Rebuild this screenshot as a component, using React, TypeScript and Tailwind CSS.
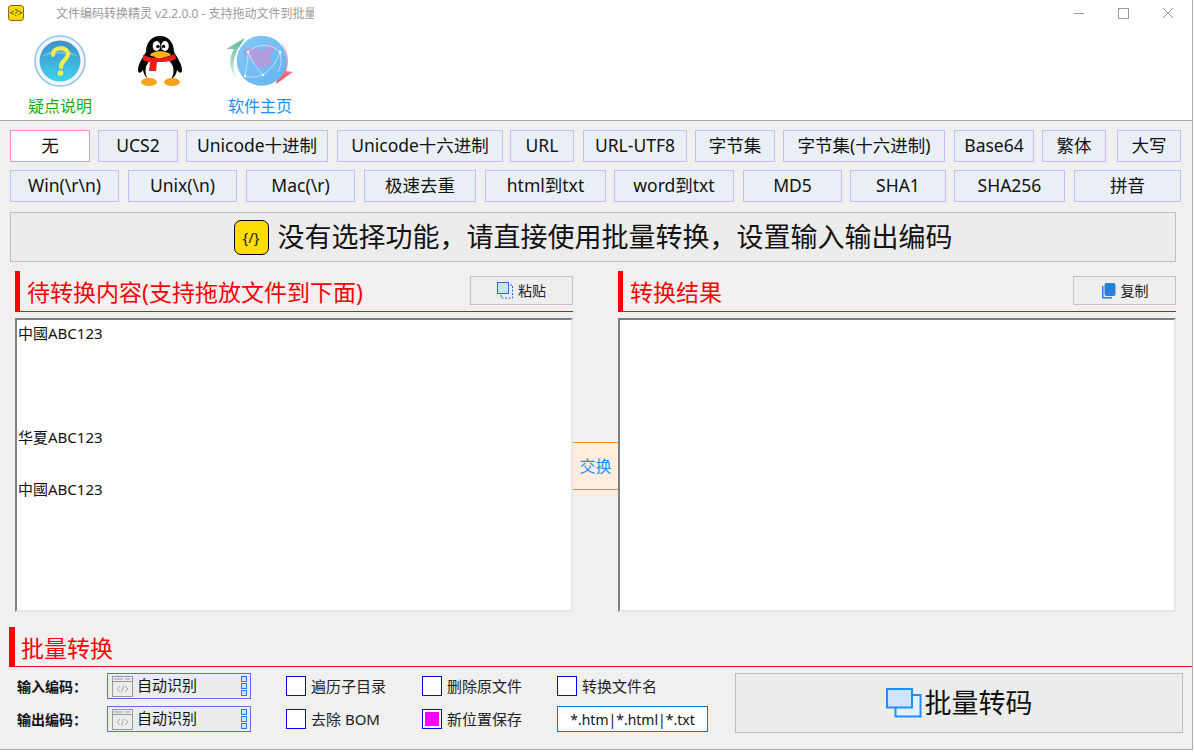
import { ReactNode } from 'react';

const rowOne = [
  { label: '无', cls: 'w-[80px] bg-white border-[#ff8fc0]' },
  { label: 'UCS2', cls: 'w-[80px] ml-[8px] bg-[#e9eff5] border-[#c0c0ff]' },
  { label: 'Unicode十进制', cls: 'w-[142px] ml-[8px] bg-[#e9eff5] border-[#c0c0ff]' },
  { label: 'Unicode十六进制', cls: 'w-[166px] ml-[9px] bg-[#e9eff5] border-[#c0c0ff]' },
  { label: 'URL', cls: 'w-[64px] ml-[7px] bg-[#e9eff5] border-[#c0c0ff]' },
  { label: 'URL-UTF8', cls: 'w-[104px] ml-[9px] bg-[#e9eff5] border-[#c0c0ff]' },
  { label: '字节集', cls: 'w-[80px] ml-[8px] bg-[#e9eff5] border-[#c0c0ff]' },
  { label: '字节集(十六进制)', cls: 'w-[162px] ml-[8px] bg-[#e9eff5] border-[#c0c0ff]' },
  { label: 'Base64', cls: 'w-[80px] ml-[9px] bg-[#e9eff5] border-[#c0c0ff]' },
  { label: '繁体', cls: 'w-[64px] ml-[8px] bg-[#e9eff5] border-[#c0c0ff]' },
  { label: '大写', cls: 'w-[64px] ml-[11px] bg-[#e9eff5] border-[#c0c0ff]' },
];

const rowTwo = [
  { label: 'Win(\\r\\n)', cls: 'w-[109px] bg-[#e9eff5] border-[#c0c0ff]' },
  { label: 'Unix(\\n)', cls: 'w-[109px] ml-[9px] bg-[#e9eff5] border-[#c0c0ff]' },
  { label: 'Mac(\\r)', cls: 'w-[109px] ml-[9px] bg-[#e9eff5] border-[#c0c0ff]' },
  { label: '极速去重', cls: 'w-[112px] ml-[9px] bg-[#e9eff5] border-[#c0c0ff]' },
  { label: 'html到txt', cls: 'w-[121px] ml-[9px] bg-[#e9eff5] border-[#c0c0ff]' },
  { label: 'word到txt', cls: 'w-[120px] ml-[8px] bg-[#e9eff5] border-[#c0c0ff]' },
  { label: 'MD5', cls: 'w-[99px] ml-[9px] bg-[#e9eff5] border-[#c0c0ff]' },
  { label: 'SHA1', cls: 'w-[96px] ml-[8px] bg-[#e9eff5] border-[#c0c0ff]' },
  { label: 'SHA256', cls: 'w-[111px] ml-[8px] bg-[#e9eff5] border-[#c0c0ff]' },
  { label: '拼音', cls: 'w-[107px] ml-[9px] bg-[#e9eff5] border-[#c0c0ff]' },
];

function ToolButton({ label, cls }: { label: string; cls: string }) {
  return (
    <button className={`h-[32px] shrink-0 border pb-px text-[17.5px] leading-none text-[#111] ${cls}`}>
      {label}
    </button>
  );
}

function HelpIcon() {
  return (
    <svg width="52" height="52" viewBox="0 0 52 52">
      <defs>
        <linearGradient id="helpFill" x1="0" y1="0" x2="0" y2="1">
          <stop offset="0" stopColor="#3f8fc8" />
          <stop offset="1" stopColor="#3fd0ee" />
        </linearGradient>
      </defs>
      <circle cx="26" cy="26" r="25" fill="#f3f5f8" stroke="#8fc2ec" strokeWidth="1.5" />
      <circle cx="26" cy="26" r="20.5" fill="url(#helpFill)" />
      <path d="M8 22c6-9 30-9 36 0-8-4-28-4-36 0z" fill="#fff" opacity="0.25" />
      <path d="M19 20c0-9 15-9 15-1 0 6-7 6-7 13" fill="none" stroke="#ffee4a" strokeWidth="4" strokeLinecap="round" />
      <circle cx="26.5" cy="38" r="2.8" fill="#ffee4a" />
    </svg>
  );
}

function PenguinIcon() {
  return (
    <svg width="46" height="52" viewBox="0 0 46 52">
      <path d="M23 1c9 0 14 7 14 16 3 5 8 12 8 18 0 4-3 3-5 0-1 6-5 12-17 12S7 41 6 35c-2 3-5 4-5 0 0-6 5-13 8-18C9 8 14 1 23 1z" fill="#050505" />
      <ellipse cx="22.5" cy="36" rx="14" ry="14" fill="#fff" />
      <ellipse cx="19.5" cy="11" rx="3.8" ry="5" fill="#fff" />
      <ellipse cx="28" cy="11" rx="3.8" ry="5" fill="#fff" />
      <circle cx="21" cy="11.5" r="1.8" fill="#111" />
      <circle cx="26.5" cy="11.5" r="1.8" fill="#111" />
      <path d="M13 20c3-5 17-5 21 0-3 3-18 3-21 0z" fill="#f9b21a" />
      <path d="M6 20c10 4 22 4 32-1l1 5c-4 2-9 3-14 3h-5l-1 9h-7l1-9c-3 0-5-1-7-2z" fill="#ee1c14" />
      <ellipse cx="12" cy="47" rx="8" ry="4" fill="#f7a21b" />
      <ellipse cx="35" cy="47" rx="8" ry="4" fill="#f7a21b" />
    </svg>
  );
}

function GlobeIcon() {
  return (
    <svg width="68" height="52" viewBox="0 0 68 52">
      <defs>
        <linearGradient id="leftArrow" x1="0" y1="0" x2="0" y2="1">
          <stop offset="0" stopColor="#5fb59a" />
          <stop offset="1" stopColor="#e4f3ee" />
        </linearGradient>
        <linearGradient id="rightArrow" x1="0" y1="0" x2="0" y2="1">
          <stop offset="0" stopColor="#f9dbe8" />
          <stop offset="1" stopColor="#e8505f" />
        </linearGradient>
        <linearGradient id="globeFill" x1="0" y1="0" x2="1" y2="1">
          <stop offset="0" stopColor="#85c8f7" />
          <stop offset="1" stopColor="#62b4f0" />
        </linearGradient>
      </defs>
      <path d="M0 14L19 3l-5 8C8 18 5 34 11 44 3 36 2 24 8 14z" fill="url(#leftArrow)" />
      <path d="M54 6c8 7 10 20 6 30l7 1-17 12 3-11c6-10 7-23 1-32z" fill="url(#rightArrow)" />
      <circle cx="35.7" cy="25.7" r="25" fill="url(#globeFill)" />
      <path d="M17 16l5-2 7-2 8 4 4-7 8 2-2 6-3 4 2 6-5 5h-9l-5-6-5-4-4-3z" fill="#ae9fdc" />
      <path d="M22 17C32 8 44 8 54 17M22 17C22 28 20 34 19 41M19 41c6 2 12 1 18-1M37 40c8-6 14-13 17-23M22 17c4 9 9 17 15 23M54 17c2 8 1 14-2 20" fill="none" stroke="#dceefb" strokeWidth="0.7" />
      <circle cx="22" cy="17" r="1.2" fill="#fff" />
      <circle cx="54" cy="17" r="1.2" fill="#fff" />
      <circle cx="19" cy="41" r="1.2" fill="#fff" />
      <circle cx="37" cy="40" r="1.2" fill="#fff" />
    </svg>
  );
}

function ToolbarItem({ icon, label, color }: { icon: ReactNode; label?: string; color?: string }) {
  return (
    <div className="w-[100px] flex flex-col items-center">
      <div className="h-[52px] flex items-center justify-center">{icon}</div>
      {label && <div className={`mt-[7px] text-[16px] leading-[24px] ${color}`}>{label}</div>}
    </div>
  );
}

function CodeBadge({ big }: { big?: boolean }) {
  return big ? (
    <span className="w-[35px] h-[35px] rounded-[7px] border border-black bg-[#ffdd00] flex items-center justify-center text-[15px] leading-none text-[#222]">
      {'{/}'}
    </span>
  ) : (
    <span className="w-[16px] h-[16px] rounded-[3px] border border-[#8a6d1c] bg-[#ffd800] flex items-center justify-center text-[8px] leading-none text-[#333]">
      {'<?>'}
    </span>
  );
}

function PasteIcon() {
  return (
    <svg width="16" height="17" viewBox="0 0 16 17">
      <rect x="0.5" y="0.5" width="11" height="11" fill="#cfe3fb" stroke="#1e6fd9" />
      <path d="M13 3h2.5v13H4V13" fill="none" stroke="#1e6fd9" strokeDasharray="2 1.5" />
    </svg>
  );
}

function CopyIcon() {
  return (
    <svg width="15" height="16" viewBox="0 0 15 16">
      <path d="M2.5 3H1v12.5h10V14H2.5z" fill="#2481dc" />
      <rect x="3.5" y="0" width="11" height="13" rx="2" fill="#2481dc" />
    </svg>
  );
}

function SectionTitle({ title, action }: { title: string; action?: ReactNode }) {
  return (
    <div className="h-[41px] flex flex-col">
      <div className="h-[40px] flex justify-between border-l-[5px] border-l-[#ff0000]">
        <span className="pl-[7px] pt-[3px] text-[23px] leading-[36px] text-[#ff0000]">{title}</span>
        {action}
      </div>
      <div className="h-px bg-[#ff0000]" />
    </div>
  );
}

function ActionButton({ icon, label }: { icon: ReactNode; label: string }) {
  return (
    <button className="mt-[5px] w-[103px] h-[29px] flex items-center justify-center gap-[5px] border border-[#c4c4c4] bg-[#eeeeee] text-[14px] text-[#222]">
      {icon}
      {label}
    </button>
  );
}

function TextBox({ children }: { children?: ReactNode }) {
  return (
    <div className="mt-[6px] h-[294px] border-2 border-t-[#808080] border-l-[#808080] border-r-[#e6e6e6] border-b-[#e6e6e6] bg-white pl-px text-[15px] leading-[26px] text-[#111] whitespace-pre">
      {children}
    </div>
  );
}

function EncodingSelect() {
  return (
    <div className="w-[144px] h-[26px] flex items-center border border-[#6a6ae0] bg-[#ececec] pl-[4px] pr-[3px]">
      <svg width="21" height="21" viewBox="0 0 21 21">
        <rect x="0.5" y="0.5" width="20" height="20" fill="none" stroke="#999" />
        <path d="M0 5.5h21M2 3h9M13 3h5" stroke="#999" />
        <path d="M8 10l-3 3 3 3M13 10l3 3-3 3M11.5 9.5l-2 7" fill="none" stroke="#aaa" />
      </svg>
      <span className="ml-[4px] flex-1 pb-[2px] text-[15px] text-[#111]">自动识别</span>
      <span className="flex flex-col gap-px">
        <i className="block w-[6px] h-[6px] border border-[#1e7bff] bg-[#cfe3fb]" />
        <i className="block w-[6px] h-[6px] border border-[#1e7bff] bg-[#cfe3fb]" />
        <i className="block w-[6px] h-[6px] border border-[#1e7bff] bg-[#cfe3fb]" />
      </span>
    </div>
  );
}

function Check({ label, checked }: { label: string; checked?: boolean }) {
  return (
    <div className="h-[20px] flex items-center gap-[5px] text-[15px] text-[#222]">
      <span className="w-[20px] h-[20px] border border-[#0000ee] bg-white p-[2px]">
        {checked && <span className="block w-full h-full bg-[#ff00ff]" />}
      </span>
      {label}
    </div>
  );
}

export default function App() {
  return (
    <div className="w-[1194px] h-[752px] bg-white overflow-hidden font-['Noto_Sans','Noto_Sans_CJK_SC',sans-serif]">
      <div className="w-[1193px] h-[750px] border-r border-b border-[#ababab] bg-[#f0f0f0] flex flex-col">
        {/* title bar + icon strip */}
        <div className="h-[121px] shrink-0 bg-white border-b border-[#a8a8a8]">
          <div className="h-[30px] flex items-start">
            <div className="ml-[8px] mt-[5px]">
              <CodeBadge />
            </div>
            <div className="ml-[32px] mt-[4px] w-[258px] overflow-hidden whitespace-nowrap text-[12px] leading-[20px] text-[#9a9a9a]">
              文件编码转换精灵 v2.2.0.0 - 支持拖动文件到批量
            </div>
            <div className="ml-auto flex items-center gap-[33px] pr-[18px] pt-[7px]">
              <svg width="12" height="12" viewBox="0 0 12 12"><path d="M1 6.5h10" stroke="#999" /></svg>
              <svg width="11" height="11" viewBox="0 0 11 11"><rect x="0.5" y="0.5" width="10" height="10" fill="none" stroke="#999" /></svg>
              <svg width="12" height="12" viewBox="0 0 12 12"><path d="M1 1l10 10M11 1L1 11" stroke="#999" /></svg>
            </div>
          </div>
          <div className="mt-[5px] pl-[10px] flex">
            <ToolbarItem icon={<HelpIcon />} label="疑点说明" color="text-[#10b010]" />
            <ToolbarItem icon={<PenguinIcon />} />
            <ToolbarItem icon={<GlobeIcon />} label="软件主页" color="text-[#1e90ff]" />
          </div>
        </div>

        {/* function buttons */}
        <div className="mt-[9px] pl-[10px] flex">
          {rowOne.map((b) => (
            <ToolButton key={b.label} {...b} />
          ))}
        </div>
        <div className="mt-[8px] pl-[10px] flex">
          {rowTwo.map((b) => (
            <ToolButton key={b.label} {...b} />
          ))}
        </div>

        {/* current function banner */}
        <div className="mt-[10px] ml-[10px] w-[1166px] h-[50px] shrink-0 border border-[#c0c0c0] bg-[#ececec] flex items-center justify-center gap-[9px] text-[27px] text-[#111]">
          <CodeBadge big />
          <span>没有选择功能，请直接使用批量转换，设置输入输出编码</span>
        </div>

        {/* editors */}
        <div className="mt-[9px] ml-[15px] flex">
          <div className="w-[558px]">
            <SectionTitle title="待转换内容(支持拖放文件到下面)" action={<ActionButton icon={<PasteIcon />} label="粘贴" />} />
            <TextBox>{'中國ABC123\n\n\n\n华夏ABC123\n\n中國ABC123'}</TextBox>
          </div>
          <div className="w-[45px] flex items-center">
            <div className="mt-[48px] w-full h-[48px] border-y border-[#ff8c1a] bg-[#ffeedd] flex items-center justify-center text-[16px] text-[#1e90ff]">
              交换
            </div>
          </div>
          <div className="w-[558px]">
            <SectionTitle title="转换结果" action={<ActionButton icon={<CopyIcon />} label="复制" />} />
            <TextBox />
          </div>
        </div>

        {/* batch convert */}
        <div className="mt-[15px] ml-[9px] h-[40px] shrink-0 border-b border-b-[#ff0000] border-l-[6px] border-l-[#ff0000] pl-[6px] text-[23px] leading-[42px] text-[#ff0000]">
          批量转换
        </div>
        <div className="mt-[6px] ml-[17px] flex">
          <div className="w-[90px] flex flex-col">
            <div className="h-[26px] flex items-center text-[14px] font-bold text-[#111]">输入编码：</div>
            <div className="mt-[7px] h-[26px] flex items-center text-[14px] font-bold text-[#111]">输出编码：</div>
          </div>
          <div className="w-[179px] flex flex-col gap-[7px]">
            <EncodingSelect />
            <EncodingSelect />
          </div>
          <div className="w-[136px] pt-[3px] flex flex-col gap-[13px]">
            <Check label="遍历子目录" />
            <Check label="去除 BOM" />
          </div>
          <div className="w-[135px] pt-[3px] flex flex-col gap-[13px]">
            <Check label="删除原文件" />
            <Check label="新位置保存" checked />
          </div>
          <div className="w-[178px] flex flex-col">
            <div className="mt-[3px]">
              <Check label="转换文件名" />
            </div>
            <div className="mt-[10px] w-[151px] h-[26px] border border-[#0078d7] bg-white flex items-center justify-center text-[14px] text-[#111]">
              *.htm|*.html|*.txt
            </div>
          </div>
          <button className="w-[448px] h-[60px] border border-[#bdbdbd] bg-[#ececec] flex items-center justify-center gap-[3px] text-[27px] text-[#111]">
            <svg width="36" height="30" viewBox="0 0 36 30">
              <rect x="9.5" y="7" width="25" height="21.5" fill="#e3effc" stroke="#1e90ff" strokeWidth="2" />
              <rect x="1" y="1" width="25" height="18.5" fill="#cfe3fb" stroke="#1e90ff" strokeWidth="2" />
            </svg>
            批量转码
          </button>
        </div>
      </div>
    </div>
  );
}
